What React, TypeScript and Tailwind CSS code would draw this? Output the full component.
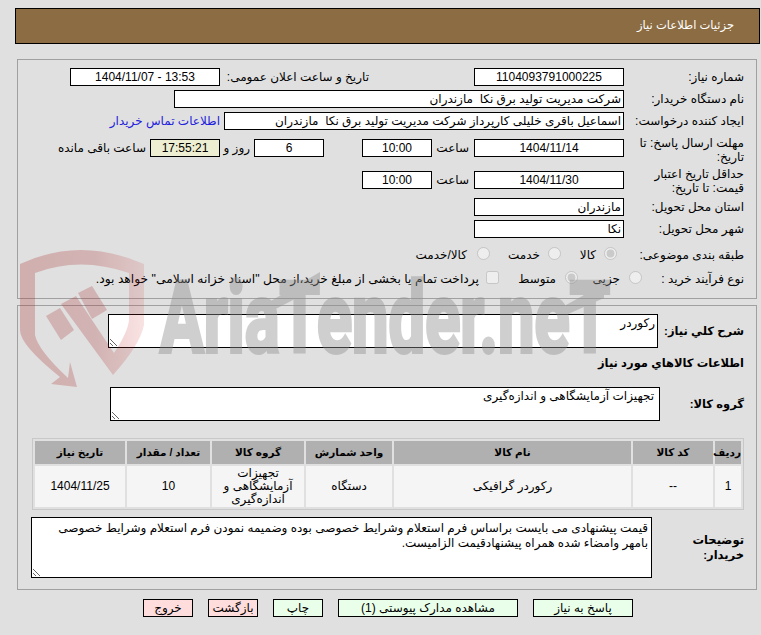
import type { ReactNode } from 'react'

const inputCls = 'h-[18px] border border-black px-[2px] text-[12px] text-black outline-none'

function Label({ children, className = '' }: { children: ReactNode; className?: string }) {
  return <div className={`shrink-0 text-right leading-[14px] ${className}`}>{children}</div>
}

function Field({ value, w, left }: { value: string; w: string; left?: boolean }) {
  return <input readOnly value={value} dir="rtl" className={`${inputCls} bg-white ${w} ${left ? 'text-right' : 'text-center'}`} />
}

function Radio({ checked, className = '' }: { checked?: boolean; className?: string }) {
  return <input type="radio" disabled defaultChecked={checked} className={`m-0 h-[13px] w-[13px] shrink-0 ${className}`} />
}

function ActionButton({ children, w, red }: { children: ReactNode; w: string; red?: boolean }) {
  return (
    <button className={`h-[18px] border border-black text-[12px] leading-[14px] text-black ${w} ${red ? 'bg-[#ffdddd]' : 'bg-[#eaffea]'}`}>
      {children}
    </button>
  )
}

const columns = [
  { title: 'ردیف', w: 'w-[26px]' },
  { title: 'کد کالا', w: 'w-[80px]' },
  { title: 'نام کالا', w: 'w-[237px]' },
  { title: 'واحد شمارش', w: 'w-[86px]' },
  { title: 'گروه کالا', w: 'w-[92px]' },
  { title: 'تعداد / مقدار', w: 'w-[83px]' },
  { title: 'تاریخ نیاز', w: 'w-[90px]' },
]

const rowValues = ['1', '--', 'رکوردر گرافیکی', 'دستگاه', 'تجهیزات آزمایشگاهی و اندازه‌گیری', '10', '1404/11/25']

function Watermark() {
  return (
    <svg viewBox="0 0 761 635" className="pointer-events-none absolute inset-0 z-10 h-[635px] w-[761px]">
      <defs>
        <linearGradient id="shield" x1="0" x2="1" y1="0" y2="0">
          <stop offset="0" stopColor="#a82a2a" stopOpacity="0.27" />
          <stop offset="0.6" stopColor="#a82a2a" stopOpacity="0.25" />
          <stop offset="1" stopColor="#d03030" stopOpacity="0.14" />
        </linearGradient>
      </defs>
      <path
        fill="url(#shield)"
        d="M20 264Q80 236 144 264L144 325Q140 345 113 375L61 304L76 296L114 353Q128 332 129 320L129 273Q80 256 35 273L35 335Q38 350 68 378L70 362L77 387L51 384L60 377Q20 345 20 330Z"
      />
      <path fill="#a82a2a" fillOpacity="0.25" d="M46 316L60 308L74 330L61 340Z" />
      <path fill="#a82a2a" fillOpacity="0.25" d="M78 293L92 286L107 310L92 319Z" />
      <g opacity="0.42" fill="#8f8f8f">
        <text
          x="160"
          y="352"
          direction="ltr"
          textLength="450"
          lengthAdjust="spacingAndGlyphs"
          fontFamily="Roboto, sans-serif"
          fontWeight="700"
          fontSize="98"
          stroke="#8f8f8f"
          strokeWidth="4"
        >
          AriaTender.neT
        </text>
        <path d="M264 305L320 272L320 286L264 315Z" />
        <path d="M566 305L604 284L604 298L566 315Z" />
      </g>
    </svg>
  )
}

export default function App() {
  return (
    <div dir="rtl" className="relative h-[635px] w-[761px] overflow-hidden bg-[#e0e0e0] pt-2 font-['Liberation_Sans','DejaVu_Sans',sans-serif] text-[12px] text-black">
      <div className="ml-[15px] mr-[1px] flex h-[36px] items-center border border-black bg-[#8c6c42] pr-[25px] text-[11.5px] text-white">
        جزئیات اطلاعات نیاز
      </div>

      <div className="ml-[17px] mr-[4px] mt-[15px] h-[240px] border border-[#a0a0a0] pr-[12px] pt-[8px]">
        <div className="flex h-[18px] items-center">
          <Label className="w-[120px]">شماره نیاز:</Label>
          <Field value="1104093791000225" w="w-[150px]" />
          <Label className="mr-[105px] w-[149px]">تاریخ و ساعت اعلان عمومی:</Label>
          <input readOnly value="1404/11/07 - 13:53" dir="ltr" className={`${inputCls} w-[150px] bg-white text-center`} />
        </div>
        <div className="mt-[4px] flex h-[18px] items-center">
          <Label className="w-[120px]">نام دستگاه خریدار:</Label>
          <Field value="شرکت مدیریت تولید برق نکا  مازندران" w="w-[450px]" left />
        </div>
        <div className="mt-[4px] flex h-[18px] items-center">
          <Label className="w-[120px]">ایجاد کننده درخواست:</Label>
          <Field value="اسماعیل باقری خلیلی کارپرداز شرکت مدیریت تولید برق نکا  مازندران" w="w-[400px]" left />
          <a className="mr-[4px] text-[#2222dd]">اطلاعات تماس خریدار</a>
        </div>
        <div className="mt-[9px] flex h-[18px] items-center">
          <Label className="-mt-[3px] w-[120px] self-start">مهلت ارسال پاسخ: تا تاریخ:</Label>
          <Field value="1404/11/14" w="w-[150px]" />
          <div className="w-[42px] pr-[5px]">ساعت</div>
          <Field value="10:00" w="w-[70px]" />
          <div className="w-[38px]" />
          <Field value="6" w="w-[70px]" />
          <div className="w-[34px] pr-[4px]">روز و</div>
          <input readOnly value="17:55:21" className={`${inputCls} w-[70px] bg-[#eeeed2] text-center`} />
          <div className="pr-[4px]">ساعت باقی مانده</div>
        </div>
        <div className="mt-[14px] flex h-[18px] items-center">
          <Label className="-mt-[4px] w-[120px] self-start">حداقل تاریخ اعتبار قیمت: تا تاریخ:</Label>
          <Field value="1404/11/30" w="w-[150px]" />
          <div className="w-[42px] pr-[5px]">ساعت</div>
          <Field value="10:00" w="w-[70px]" />
        </div>
        <div className="mt-[9px] flex h-[18px] items-center">
          <Label className="w-[120px]">استان محل تحویل:</Label>
          <Field value="مازندران" w="w-[150px]" left />
        </div>
        <div className="mt-[4px] flex h-[18px] items-center">
          <Label className="w-[120px]">شهر محل تحویل:</Label>
          <Field value="نکا" w="w-[150px]" left />
        </div>
        <div className="mt-[8px] flex h-[18px] items-center">
          <Label className="w-[120px]">طبقه بندی موضوعی:</Label>
          <Radio checked className="mb-[3px] mr-[7px]" />
          <div className="mr-[8px] w-[35px]">کالا</div>
          <Radio className="mb-[3px]" />
          <div className="mr-[8px] w-[50px]">خدمت</div>
          <Radio className="mb-[3px]" />
          <div className="mr-[10px]">کالا/خدمت</div>
        </div>
        <div className="mt-[6px] flex h-[18px] items-center">
          <Label className="w-[102px]">نوع فرآیند خرید :</Label>
          <Radio className="mb-[3px]" />
          <div className="mr-[9px] w-[42px]">جزیی</div>
          <Radio checked className="mb-[3px]" />
          <div className="mr-[9px] w-[57px]">متوسط</div>
          <input type="checkbox" disabled className="m-0 mb-[3px] h-[13px] w-[13px] shrink-0" />
          <div className="mr-[7px] text-[12.3px]">پرداخت تمام یا بخشی از مبلغ خرید،از محل "اسناد خزانه اسلامی" خواهد بود.</div>
        </div>
      </div>

      <div className="ml-[17px] mr-[4px] mt-[6px] h-[285px] border border-[#a0a0a0] pr-[12px] pt-[8px]">
        <div className="flex items-center">
          <Label className="w-[86px] text-[11.5px] font-bold">شرح کلي نياز:</Label>
          <textarea readOnly value="رکوردر" className="h-[34px] w-[550px] border border-black bg-white px-[2px] pt-[1px] text-[12px] leading-[14px] outline-none" />
        </div>
        <div className="mt-[7px] text-[11.5px] font-bold leading-[16px]">اطلاعات کالاهاي مورد نياز</div>
        <div className="mt-[16px] flex items-center">
          <Label className="w-[84px] text-[11.5px] font-bold">گروه کالا:</Label>
          <textarea readOnly value="تجهیزات آزمایشگاهی و اندازه‌گیری" className="h-[34px] w-[550px] border border-black bg-white px-[5px] pt-[1px] text-[12px] leading-[14px] outline-none" />
        </div>
        <table className="mt-[17px] w-[711px] table-fixed border-separate border-spacing-[2px] border border-[#c8c8c8]">
          <thead>
            <tr>
              {columns.map(c => (
                <th key={c.title} className={`h-[23px] bg-[#b0b0b0] p-0 text-center text-[10.5px] font-bold ${c.w}`}>{c.title}</th>
              ))}
            </tr>
          </thead>
          <tbody>
            <tr>
              {rowValues.map((v, i) => (
                <td key={i} className="h-[41px] bg-[#f5f5f5] p-0 text-center leading-[13px]">{v}</td>
              ))}
            </tr>
          </tbody>
        </table>
        <div className="mt-[7px] flex items-center">
          <Label className="w-[92px] text-[11.5px] font-bold leading-[15px]">توضیحات خریدار:</Label>
          <textarea
            readOnly
            value="قیمت پیشنهادی می بایست براساس فرم استعلام وشرایط خصوصی بوده وضمیمه نمودن فرم استعلام وشرایط خصوصی بامهر وامضاء شده همراه پیشنهادقیمت الزامیست."
            className="h-[61px] w-[621px] border border-black bg-white px-[3px] pt-[3px] text-[12px] leading-[15px] outline-none"
          />
        </div>
      </div>

      <div className="mr-[128px] mt-[9px] flex gap-[15px]">
        <ActionButton w="w-[100px]">پاسخ به نیاز</ActionButton>
        <ActionButton w="w-[180px]">مشاهده مدارک پیوستی (1)</ActionButton>
        <ActionButton w="w-[50px]">چاپ</ActionButton>
        <ActionButton w="w-[50px]" red>بازگشت</ActionButton>
        <ActionButton w="w-[50px]" red>خروج</ActionButton>
      </div>

      <Watermark />
    </div>
  )
}
